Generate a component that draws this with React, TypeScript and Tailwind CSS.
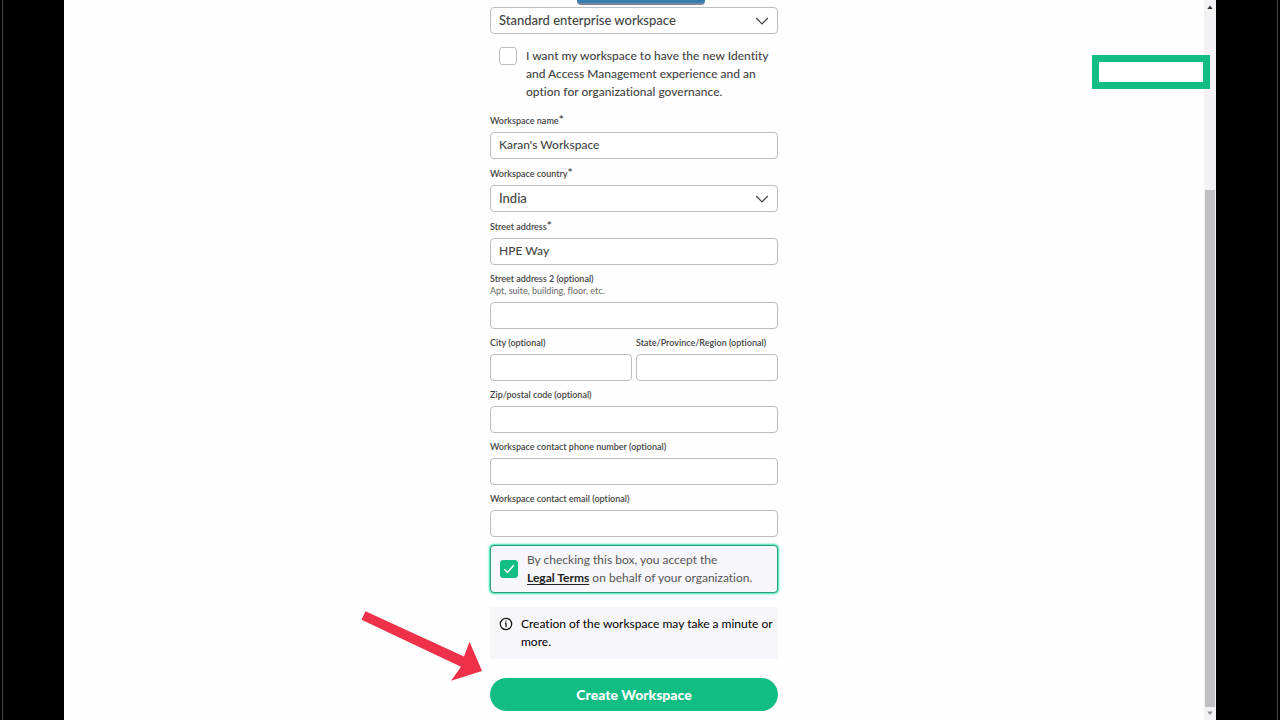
import { useState } from "react";
import type { ReactNode } from "react";

const control =
  "block h-[27px] w-full rounded border border-[#bdbdbd] bg-white px-2 pb-0.5 leading-5 font-medium text-[#444444] outline-none";

function Field({
  id,
  label,
  required,
  hint,
  children,
}: {
  id: string;
  label: string;
  required?: boolean;
  hint?: string;
  children: ReactNode;
}) {
  return (
    <div className="flex flex-col">
      <label
        htmlFor={id}
        className={
          required
            ? "flex h-[13px] items-center text-[9px] font-semibold whitespace-nowrap text-[#444444]"
            : "flex h-3 items-center text-[9px] font-semibold whitespace-nowrap text-[#444444]"
        }
      >
        {label}
        {required && <span className="self-start text-[12px] leading-3">*</span>}
      </label>
      {hint && <p className="text-[9px] leading-3 text-[#666666]">{hint}</p>}
      <div className="mt-[5px]">{children}</div>
    </div>
  );
}

function TextField({
  id,
  label,
  required,
  hint,
  value = "",
  type = "text",
}: {
  id: string;
  label: string;
  required?: boolean;
  hint?: string;
  value?: string;
  type?: string;
}) {
  return (
    <Field id={id} label={label} required={required} hint={hint}>
      <input
        id={id}
        type={type}
        defaultValue={value}
        required={required}
        className={`${control} text-[12px]`}
      />
    </Field>
  );
}

function SelectBox({ id, value, name }: { id: string; value: string; name?: string }) {
  return (
    <div className="relative">
      <select
        id={id}
        aria-label={name}
        defaultValue={value}
        className={`${control} appearance-none pr-8 text-[13px]`}
      >
        <option>{value}</option>
      </select>
      <svg
        viewBox="0 0 14 14"
        className="pointer-events-none absolute top-[7px] right-[9px] size-3.5"
        fill="none"
        stroke="#444444"
        strokeWidth="1.2"
      >
        <path d="M1.2 4l5.8 5.8L12.8 4" />
      </svg>
    </div>
  );
}

function Scrollbar() {
  return (
    <div className="flex w-3 shrink-0 flex-col items-center bg-[#f2f1f4]" aria-hidden="true">
      <svg viewBox="0 0 12 14" className="h-3.5 w-3 shrink-0">
        <path d="M3.4 9L6 5.6 8.6 9z" fill="#333333" />
      </svg>
      <div className="grow-[176]" />
      <div className="w-2.5 grow-[517] bg-[#c1c0c3]" />
      <svg viewBox="0 0 12 13" className="h-[13px] w-3 shrink-0">
        <path d="M3.4 4.5L6 7.9l2.6-3.4z" fill="#8a8a8a" />
      </svg>
    </div>
  );
}

export default function App() {
  const [iam, setIam] = useState(false);
  const [terms, setTerms] = useState(true);

  return (
    <div className="flex h-screen overflow-hidden bg-black font-['Lato',sans-serif] [font-variant-ligatures:none]">
      <div className="w-[5%] shrink-0 pl-0.5">
        <div className="h-full w-px bg-[#444444]" />
      </div>

      <div className="relative flex min-w-0 grow bg-[#fefefe]">
        <main className="flex min-w-0 grow justify-center">
          <form className="relative w-72 pt-[7px]" onSubmit={(e) => e.preventDefault()}>
            <SelectBox id="type" name="Workspace type" value="Standard enterprise workspace" />

            <label className="mt-[13px] flex gap-[9px] pl-[9px] text-[12px] leading-[18px] font-medium text-[#444444]">
              <input
                type="checkbox"
                checked={iam}
                onChange={() => setIam(!iam)}
                className="size-[18px] shrink-0 appearance-none rounded-[3px] border border-[#bdbdbd] bg-white checked:bg-[#12bd84]"
              />
              <span className="whitespace-nowrap">
                I want my workspace to have the new Identity
                <br />
                and Access Management experience and an
                <br />
                option for organizational governance.
              </span>
            </label>

            <div className="mt-[13px] flex flex-col gap-2">
              <TextField id="name" label="Workspace name" required value="Karan's Workspace" />
              <Field id="country" label="Workspace country" required>
                <SelectBox id="country" value="India" />
              </Field>
              <TextField id="street" label="Street address" required value="HPE Way" />
              <TextField
                id="street2"
                label="Street address 2 (optional)"
                hint="Apt, suite, building, floor, etc."
              />
              <div className="grid grid-cols-2 gap-1">
                <TextField id="city" label="City (optional)" />
                <TextField id="state" label="State/Province/Region (optional)" />
              </div>
              <TextField id="zip" label="Zip/postal code (optional)" />
              <TextField id="phone" type="tel" label="Workspace contact phone number (optional)" />
              <TextField id="email" type="email" label="Workspace contact email (optional)" />
            </div>

            <div className="mt-2 flex items-center gap-[9px] rounded border border-[#2f9c7c] bg-[#f7f6fa] py-[5px] pl-[9px] text-[12px] leading-[18px] text-[#555555] shadow-[0_0_2px_1px_#2fe3ae]">
              <span className="relative flex size-[18px] shrink-0">
                <input
                  id="terms"
                  type="checkbox"
                  checked={terms}
                  onChange={() => setTerms(!terms)}
                  className="size-[18px] appearance-none rounded-[3px] border border-[#12bd84] bg-white checked:bg-[#12bd84]"
                />
                <svg
                  viewBox="0 0 18 18"
                  className="pointer-events-none absolute inset-0"
                  fill="none"
                  stroke="white"
                  strokeWidth="1.5"
                >
                  <path d="M4.3 9.3l3.2 3.1 6.2-7.2" />
                </svg>
              </span>
              <label htmlFor="terms" className="whitespace-nowrap">
                By checking this box, you accept the
                <br />
                <a href="#legal" className="font-bold text-[#222222] underline underline-offset-2">
                  Legal Terms
                </a>{" "}
                on behalf of your organization.
              </label>
            </div>

            <div className="mt-3.5 flex gap-2 bg-[#f7f6fa] py-2 pl-[9px] text-[12px] leading-[18px] text-black">
              <svg
                viewBox="0 0 14 14"
                className="mt-0.5 size-3.5 shrink-0"
                fill="none"
                stroke="#111111"
                strokeWidth="1.2"
              >
                <circle cx="7" cy="7" r="5.7" />
                <path d="M7 5.8v4.4M5.9 6.2H7M7 3.4v1.3" />
              </svg>
              <p className="whitespace-nowrap">
                Creation of the workspace may take a minute or
                <br />
                more.
              </p>
            </div>

            <button
              type="submit"
              className="mt-[19px] block h-[33px] w-full rounded-full bg-[#12bd84] text-[14px] leading-5 font-black text-white"
            >
              Create Workspace
            </button>

            <div className="absolute top-0 left-[87px] h-[5px] w-32 rounded-b-sm border-b-2 border-[#7d8799] bg-[#347fb0]" />
            <svg
              viewBox="0 0 122 72"
              className="absolute top-[610px] -left-[129px] h-[72px] w-[122px]"
              fill="#ee3048"
              aria-hidden="true"
            >
              <path d="M4.5 1.3L.5 9.7 100 56.8 90 70.8 121 61 108.5 31.8 103 46.5z" />
            </svg>
          </form>
        </main>
        <Scrollbar />
        <div className="absolute top-[55px] right-1.5 h-[34px] w-[118px] border-7 border-[#12bd84] bg-white" />
      </div>

      <div className="flex w-[5%] shrink-0 justify-end pr-0.5">
        <div className="h-full w-px bg-[#444444]" />
      </div>
    </div>
  );
}
